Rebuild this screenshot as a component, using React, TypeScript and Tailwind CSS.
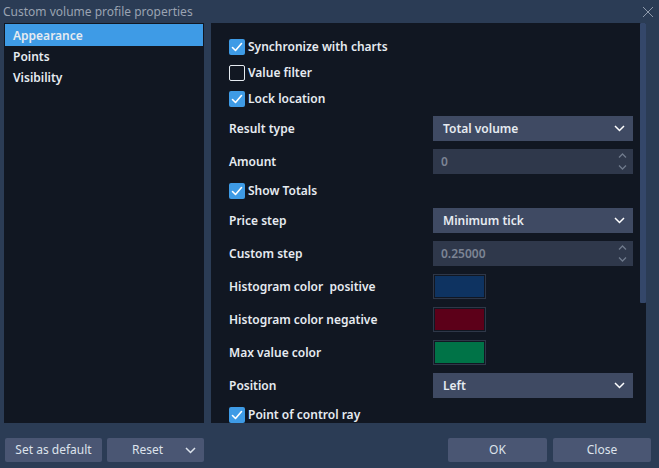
import React from 'react';

const font = { fontFamily: '"Noto Sans", "DejaVu Sans", sans-serif' };

const Check = ({ checked }: { checked: boolean }) =>
  checked ? (
    <div className="w-[16px] h-[16px] rounded-[2px] bg-[#3e9be6] flex items-center justify-center shrink-0">
      <svg width="12" height="12" viewBox="0 0 12 12" fill="none">
        <path d="M1.5 6.5 L4.5 9.5 L10.5 2.5" stroke="white" strokeWidth="1.6" strokeLinecap="round" strokeLinejoin="round" />
      </svg>
    </div>
  ) : (
    <div className="w-[16px] h-[16px] rounded-[2px] border-[1.5px] border-[#e6ebf1] shrink-0" />
  );

const CheckRow = ({ label, checked }: { label: string; checked: boolean }) => (
  <div className="h-[26px] shrink-0 flex items-center gap-[3px]">
    <Check checked={checked} />
    <span className="font-semibold">{label}</span>
  </div>
);

const Chevron = ({ color = 'white' }: { color?: string }) => (
  <svg width="11" height="7" viewBox="0 0 11 7" fill="none">
    <path d="M1 1 L5.5 5.5 L10 1" stroke={color} strokeWidth="1.5" />
  </svg>
);

const Select = ({ value }: { value: string }) => (
  <div className="w-[200px] h-[25px] bg-[#3f4a63] flex items-center justify-between pl-[10px] pr-[8px]">
    <span className="font-semibold">{value}</span>
    <Chevron />
  </div>
);

const Spin = ({ value }: { value: string }) => (
  <div className="w-[200px] h-[25px] bg-[#2f384b] flex items-center justify-between pl-[8px] pr-[6px]">
    <span className="text-[#7c8494] font-semibold">{value}</span>
    <div className="flex flex-col gap-[7px]">
      <svg width="9" height="5" viewBox="0 0 9 5" fill="none"><path d="M1 4.5 L4.5 1 L8 4.5" stroke="#6f7a8c" strokeWidth="1.3" /></svg>
      <svg width="9" height="5" viewBox="0 0 9 5" fill="none"><path d="M1 0.5 L4.5 4 L8 0.5" stroke="#6f7a8c" strokeWidth="1.3" /></svg>
    </div>
  </div>
);

const Swatch = ({ color }: { color: string }) => (
  <div className="w-[53px] h-[25px] border border-[#2e3748] p-[1px] bg-[#111722]">
    <div className="w-full h-full" style={{ background: color }} />
  </div>
);

const Row = ({ label, children }: { label: string; children: React.ReactNode }) => (
  <div className="h-[33px] shrink-0 flex items-center">
    <span className="w-[204px] font-semibold whitespace-pre">{label}</span>
    {children}
  </div>
);

const Button = ({ children, className = '' }: { children: React.ReactNode; className?: string }) => (
  <div className={`h-[24px] rounded-[2px] bg-[#4a5673] text-[#dde3ec] flex items-center ${className}`}>{children}</div>
);

export default function App() {
  return (
    <div className="w-[659px] h-[468px] bg-[#2b3c55] flex flex-col text-[12px] text-[#e6ebf1] overflow-hidden" style={font}>
      <div className="h-[23px] flex items-center justify-between pl-[3px] pr-[5px] shrink-0">
        <span className="text-[#9aa3b2]">Custom volume profile properties</span>
        <svg width="12" height="12" viewBox="0 0 12 12" fill="none">
          <path d="M1 1 L11 11 M11 1 L1 11" stroke="#8f9aab" strokeWidth="1" />
        </svg>
      </div>
      <div className="flex h-[400px] pl-[4px] gap-[7px] shrink-0">
        <div className="w-[200px] bg-[#111722] p-[1px] flex flex-col">
          <div className="h-[22px] bg-[#3e9be6] pl-[8px] pt-[1px] flex items-center font-semibold">Appearance</div>
          <div className="h-[21px] pl-[8px] pt-[1px] flex items-center font-semibold">Points</div>
          <div className="h-[20px] pl-[8px] pt-[1px] flex items-center font-semibold">Visibility</div>
        </div>
        <div className="w-[435px] bg-[#111722] flex overflow-hidden">
          <div className="flex-1 pl-[18px] pt-[11px] flex flex-col">
            <CheckRow label="Synchronize with charts" checked />
            <CheckRow label="Value filter" checked={false} />
            <CheckRow label="Lock location" checked />
            <Row label="Result type"><Select value="Total volume" /></Row>
            <Row label="Amount"><Spin value="0" /></Row>
            <CheckRow label="Show Totals" checked />
            <Row label="Price step"><Select value="Minimum tick" /></Row>
            <Row label="Custom step"><Spin value="0.25000" /></Row>
            <Row label="Histogram color  positive"><Swatch color="#0e3361" /></Row>
            <Row label="Histogram color negative"><Swatch color="#5c0019" /></Row>
            <Row label="Max value color"><Swatch color="#007347" /></Row>
            <Row label="Position"><Select value="Left" /></Row>
            <CheckRow label="Point of control ray" checked />
          </div>
          <div className="w-[6px] flex flex-col">
            <div className="h-[280px] bg-[#34476a] rounded-[1px]" />
          </div>
        </div>
      </div>
      <div className="flex items-start pt-[15px] pl-[5px] pr-[8px]">
        <Button className="w-[97px] justify-center">Set as default</Button>
        <Button className="w-[97px] ml-[5px] pl-[25px] pr-[8px] justify-between">
          <span>Reset</span>
          <Chevron color="#dde3ec" />
        </Button>
        <div className="flex-1" />
        <Button className="w-[99px] justify-center">OK</Button>
        <Button className="w-[98px] ml-[6px] justify-center">Close</Button>
      </div>
    </div>
  );
}
